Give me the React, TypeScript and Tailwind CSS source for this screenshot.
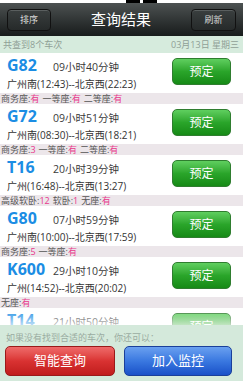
import React from "react";

type Seat = { name: string; value: string };
type Train = {
  code: string;
  duration: string;
  route: string;
  seats: Seat[];
};

const trains: Train[] = [
  {
    code: "G82",
    duration: "09小时40分钟",
    route: "广州南(12:43)--北京西(22:23)",
    seats: [
      { name: "商务座", value: "有" },
      { name: "一等座", value: "有" },
      { name: "二等座", value: "有" },
    ],
  },
  {
    code: "G72",
    duration: "09小时51分钟",
    route: "广州南(08:30)--北京西(18:21)",
    seats: [
      { name: "商务座", value: "3" },
      { name: "一等座", value: "有" },
      { name: "二等座", value: "有" },
    ],
  },
  {
    code: "T16",
    duration: "20小时39分钟",
    route: "广州(16:48)--北京西(13:27)",
    seats: [
      { name: "高级软卧", value: "12" },
      { name: "软卧", value: "1" },
      { name: "无座", value: "有" },
    ],
  },
  {
    code: "G80",
    duration: "07小时59分钟",
    route: "广州南(10:00)--北京西(17:59)",
    seats: [
      { name: "商务座", value: "5" },
      { name: "一等座", value: "有" },
    ],
  },
  {
    code: "K600",
    duration: "29小时10分钟",
    route: "广州(14:52)--北京西(20:02)",
    seats: [{ name: "无座", value: "有" }],
  },
  {
    code: "T14",
    duration: "21小时50分钟",
    route: "广州(15:00)--北京西(12:50)",
    seats: [{ name: "无座", value: "有" }],
  },
];

const FONT = { fontFamily: '"Open Sans", "Noto Sans CJK SC", sans-serif' };

function TrainRow({ t }: { t: Train }) {
  return (
    <div className="shrink-0">
      <div className="flex h-[40px] justify-between bg-white pl-[7px] pr-[12px]">
        <div className="flex flex-col pt-[2px]">
          <div className="flex items-baseline">
            <span className="w-[46px] text-[16px] leading-[20px] font-bold text-[#1b8de4]">
              {t.code}
            </span>
            <span className="text-[10.5px] leading-[20px] text-[#3a3a3a]">
              {t.duration}
            </span>
          </div>
          <span className="text-[10px] leading-[14px] text-[#333]">
            {t.route}
          </span>
        </div>
        <button
          type="button"
          className="mt-[5px] flex h-[27px] w-[59px] items-center justify-center rounded-[5px] border border-[#2f7d2f] bg-gradient-to-b from-[#5fcf5f] via-[#2aa52a] to-[#168a16] text-[12px] text-white"
        >
          预定
        </button>
      </div>
      <div className="flex h-[11px] items-center bg-[#ece6ea] pl-[1px] text-[9px] leading-[11px] text-[#555]">
        {t.seats.map((s, i) => (
          <span key={s.name} className={i > 0 ? "ml-[3px]" : ""}>
            {s.name}:<span className="text-[#e8388c]">{s.value}</span>
          </span>
        ))}
      </div>
    </div>
  );
}

export default function App() {
  return (
    <div
      className="flex h-[381px] w-[243px] flex-col overflow-hidden bg-white"
      style={FONT}
    >
      {/* status bar remnant */}
      <div className="flex h-[3px] shrink-0 justify-center bg-white">
        <div className="ml-[40px] h-[3px] w-[14px] bg-black" />
        <div className="ml-[3px] h-[3px] w-[14px] bg-black" />
      </div>

      {/* Header */}
      <div className="flex h-[33px] shrink-0 items-center justify-between bg-gradient-to-b from-[#4d5252] to-[#181c1c] px-[7px]">
        <button
          type="button"
          className="h-[22px] w-[44px] rounded-[4px] border border-[#111] bg-gradient-to-b from-[#3a3f3f] to-[#262a2a] text-[9px] text-[#d8d8d8] shadow-[inset_0_1px_0_#5a5f5f]"
        >
          排序
        </button>
        <span className="text-[15px] text-white">查询结果</span>
        <button
          type="button"
          className="h-[22px] w-[45px] rounded-[4px] border border-[#111] bg-gradient-to-b from-[#3a3f3f] to-[#262a2a] text-[9px] text-[#d8d8d8] shadow-[inset_0_1px_0_#5a5f5f]"
        >
          刷新
        </button>
      </div>

      {/* Sub header */}
      <div className="flex h-[17px] shrink-0 items-center justify-between bg-[#d6ebdd] pl-[3px] pr-[4px] text-[9px] text-[#8fa096]">
        <span>共查到8个车次</span>
        <span>03月13日 星期三</span>
      </div>

      {/* List */}
      <div className="relative flex flex-1 flex-col overflow-hidden">
        {trains.map((t) => (
          <TrainRow key={t.code} t={t} />
        ))}
        <div className="pointer-events-none absolute inset-x-0 bottom-0 h-[16px] bg-gradient-to-b from-white/0 to-white/70" />
      </div>

      {/* Bottom panel */}
      <div className="flex h-[56px] shrink-0 flex-col bg-[#d4e9db] px-[5px]">
        <span className="pt-[6px] pl-[1px] text-[9px] leading-[13px] text-[#9aaca1]">
          如果没有找到合适的车次，你还可以：
        </span>
        <div className="mt-[2px] flex gap-[9px]">
          <button
            type="button"
            className="flex h-[30px] w-[110px] items-center justify-center rounded-[5px] border border-[#9a1a1a] bg-gradient-to-b from-[#ef6a6a] via-[#d93232] to-[#c01c1c] text-[13px] text-white"
          >
            智能查询
          </button>
          <button
            type="button"
            className="flex h-[30px] w-[108px] items-center justify-center rounded-[5px] border border-[#1a3f9a] bg-gradient-to-b from-[#6aa0f0] via-[#3a78e0] to-[#1a50c8] text-[13px] text-white"
          >
            加入监控
          </button>
        </div>
      </div>
    </div>
  );
}
